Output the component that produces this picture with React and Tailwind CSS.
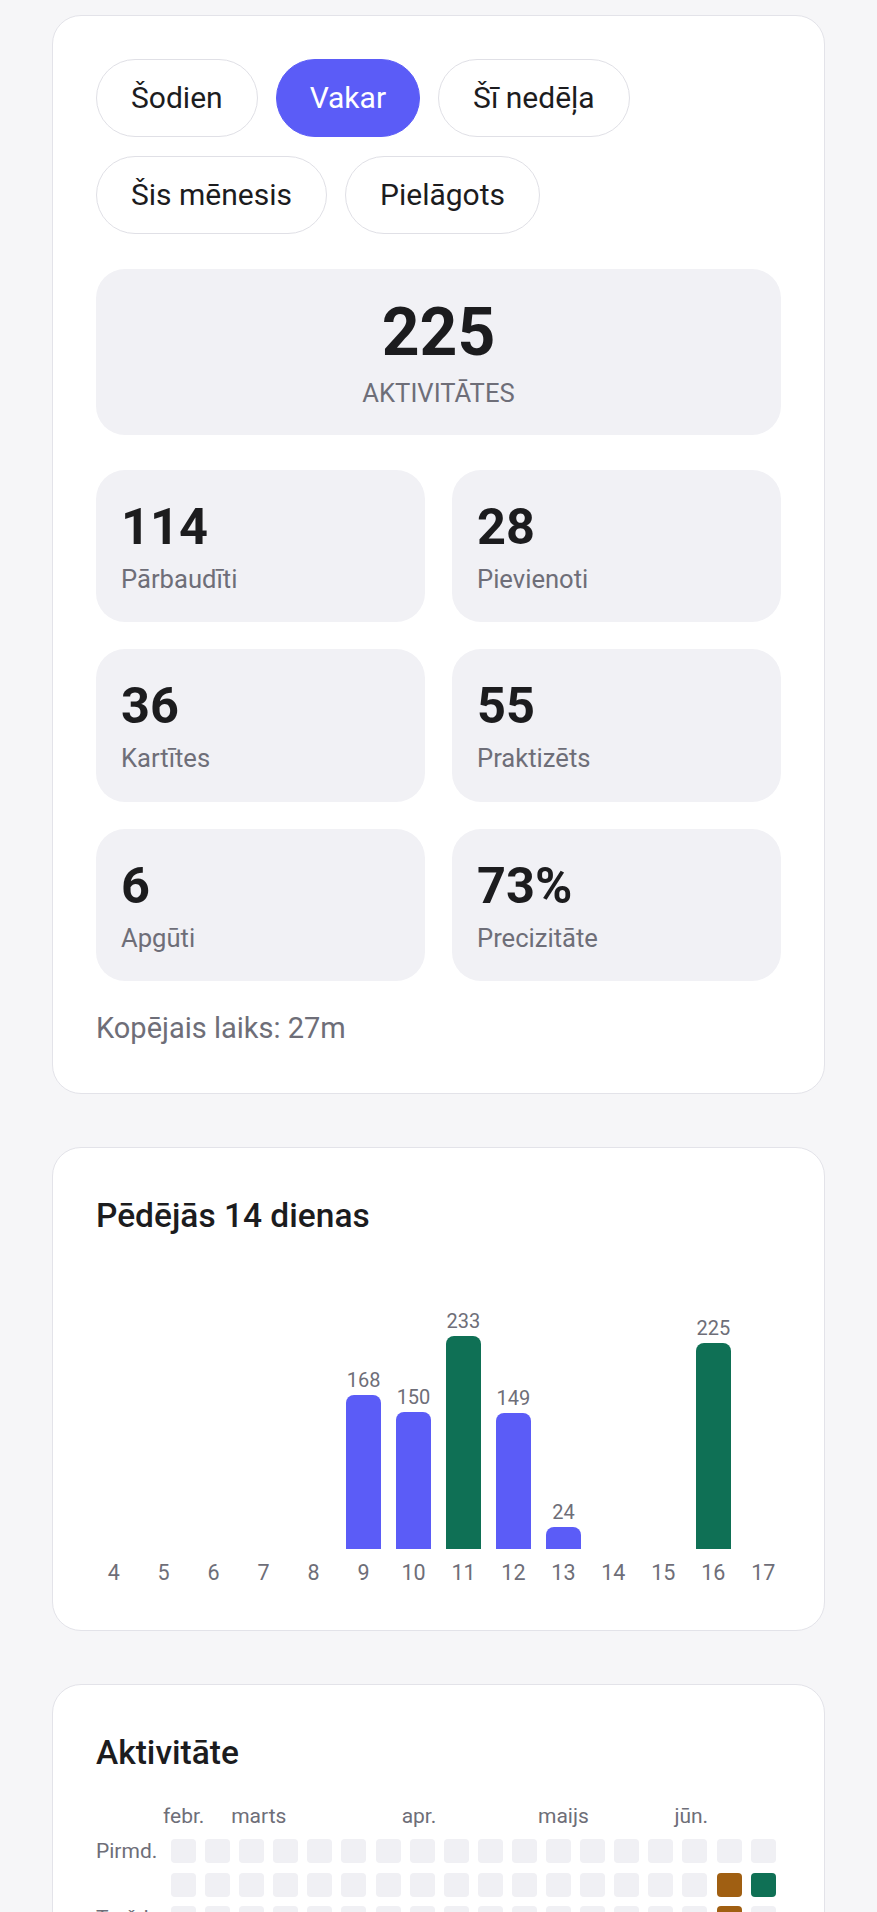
import React from 'react';

const ranges = ['Šodien', 'Vakar', 'Šī nedēļa', 'Šis mēnesis', 'Pielāgots'];

const stats = [
  { value: '114', label: 'Pārbaudīti' },
  { value: '28', label: 'Pievienoti' },
  { value: '36', label: 'Kartītes' },
  { value: '55', label: 'Praktizēts' },
  { value: '6', label: 'Apgūti' },
  { value: '73%', label: 'Precizitāte' },
];

const days = [
  { d: 4, v: 0 },
  { d: 5, v: 0 },
  { d: 6, v: 0 },
  { d: 7, v: 0 },
  { d: 8, v: 0 },
  { d: 9, v: 168 },
  { d: 10, v: 150 },
  { d: 11, v: 233, goal: true },
  { d: 12, v: 149 },
  { d: 13, v: 24 },
  { d: 14, v: 0 },
  { d: 15, v: 0 },
  { d: 16, v: 225, goal: true },
  { d: 17, v: 0 },
];

const MAX = 233;
const BAR_H = 213;

const months = { 0: 'febr.', 2: 'marts', 7: 'apr.', 11: 'maijs', 15: 'jūn.' };
const weekdays = ['Pirmd.', '', 'Trešd.', '', 'Piektd.', '', ''];

// heat levels for the last two weeks, everything else empty
const heat = {
  '1-16': 'mid',
  '1-17': 'high',
  '2-16': 'mid',
  '3-16': 'high',
  '4-16': 'mid',
  '5-16': 'low',
};

const heatColor = {
  low: 'bg-[#e2c29a]',
  mid: 'bg-[#a05f12]',
  high: 'bg-[#0f7055]',
};

function Card({ children }) {
  return (
    <div className="rounded-[29px] border border-[#e3e3e9] bg-white p-[43px]">
      {children}
    </div>
  );
}

export default function App() {
  return (
    <div className="min-h-screen bg-[#f6f6f8] px-[52px] pt-[15px] pb-[60px] font-['Roboto',sans-serif] text-[#1c1c1e]">
      <div className="flex flex-col gap-[53px]">
        <Card>
          <div className="flex flex-wrap gap-x-[18px] gap-y-[19px]">
            {ranges.map((r) => {
              const active = r === 'Vakar';
              return (
                <button
                  key={r}
                  className={
                    active
                      ? 'h-[78px] rounded-full border border-[#5b5cf7] bg-[#5b5cf7] px-[33px] text-[30px] leading-[44px] text-white'
                      : 'h-[78px] rounded-full border border-[#e0e0e6] bg-white px-[34px] text-[30px] leading-[44px] text-[#1c1c1e]'
                  }
                >
                  {r}
                </button>
              );
            })}
          </div>

          <div className="mt-[35px] rounded-[29px] bg-[#f1f1f5] pt-[27px] pb-[23px] text-center">
            <div className="text-[66px] font-bold leading-[73px]">225</div>
            <div className="mt-[6px] text-[25.6px] leading-[36.5px] uppercase text-[#6e6e78]">
              Aktivitātes
            </div>
          </div>

          <div className="mt-[35px] grid grid-cols-2 gap-[27px]">
            {stats.map((s) => (
              <div key={s.label} className="rounded-[29px] bg-[#f1f1f5] px-[25px] pt-[27px] pb-[25px]">
                <div className="text-[50.5px] font-bold leading-[60px]">{s.value}</div>
                <div className="mt-[4px] text-[25.6px] leading-[36.5px] text-[#6e6e78]">{s.label}</div>
              </div>
            ))}
          </div>

          <div className="mt-[25px] text-[29px] leading-[44px] text-[#6e6e78]">Kopējais laiks: 27m</div>
        </Card>

        <Card>
          <h2 className="text-[33.5px] font-medium leading-[50px]">Pēdējās 14 dienas</h2>
          <div className="mt-[24px] flex h-[284px] gap-[14.6px]">
            {days.map((day) => (
              <div key={day.d} className="flex flex-1 flex-col items-center justify-end">
                {day.v > 0 && (
                  <>
                    <div className="mb-[3px] text-[20px] leading-[24px] text-[#6e6e78]">{day.v}</div>
                    <div
                      className={`w-full rounded-t-[8px] ${day.goal ? 'bg-[#0f7055]' : 'bg-[#5b5cf7]'}`}
                      style={{ height: `${(day.v / MAX) * BAR_H}px` }}
                    />
                  </>
                )}
              </div>
            ))}
          </div>
          <div className="mt-[9px] flex gap-[14.6px]">
            {days.map((day) => (
              <div key={day.d} className="flex-1 text-center text-[21.5px] leading-[29px] text-[#6e6e78]">
                {day.d}
              </div>
            ))}
          </div>
        </Card>

        <Card>
          <h2 className="text-[33.5px] font-medium leading-[50px]">Aktivitāte</h2>
          <div className="mt-[24px] flex">
            <div className="w-[75px] shrink-0" />
            <div className="grid grid-cols-[repeat(18,25px)] gap-x-[9.1px]">
              {Array.from({ length: 18 }).map((_, c) => (
                <div key={c} className="h-[28px] whitespace-nowrap">
                  {months[c] && (
                    <span className="-ml-[8px] block text-[21px] leading-[28px] text-[#6e6e78]">{months[c]}</span>
                  )}
                </div>
              ))}
            </div>
          </div>
          <div className="mt-[9px] flex">
            <div className="flex w-[75px] shrink-0 flex-col gap-[9.7px]">
              {weekdays.map((w, i) => (
                <div key={i} className="h-[24px] whitespace-nowrap text-[21px] leading-[24px] text-[#6e6e78]">
                  {w}
                </div>
              ))}
            </div>
            <div className="grid grid-cols-[repeat(18,25px)] gap-x-[9.1px] gap-y-[9.7px]">
              {weekdays.map((_, r) =>
                Array.from({ length: 18 }).map((__, c) => {
                  const lvl = heat[`${r}-${c}`];
                  return (
                    <div
                      key={`${r}-${c}`}
                      className={`h-[24px] w-[25px] rounded-[4px] ${lvl ? heatColor[lvl] : 'bg-[#f0f0f4]'}`}
                    />
                  );
                })
              )}
            </div>
          </div>
        </Card>
      </div>
    </div>
  );
}
